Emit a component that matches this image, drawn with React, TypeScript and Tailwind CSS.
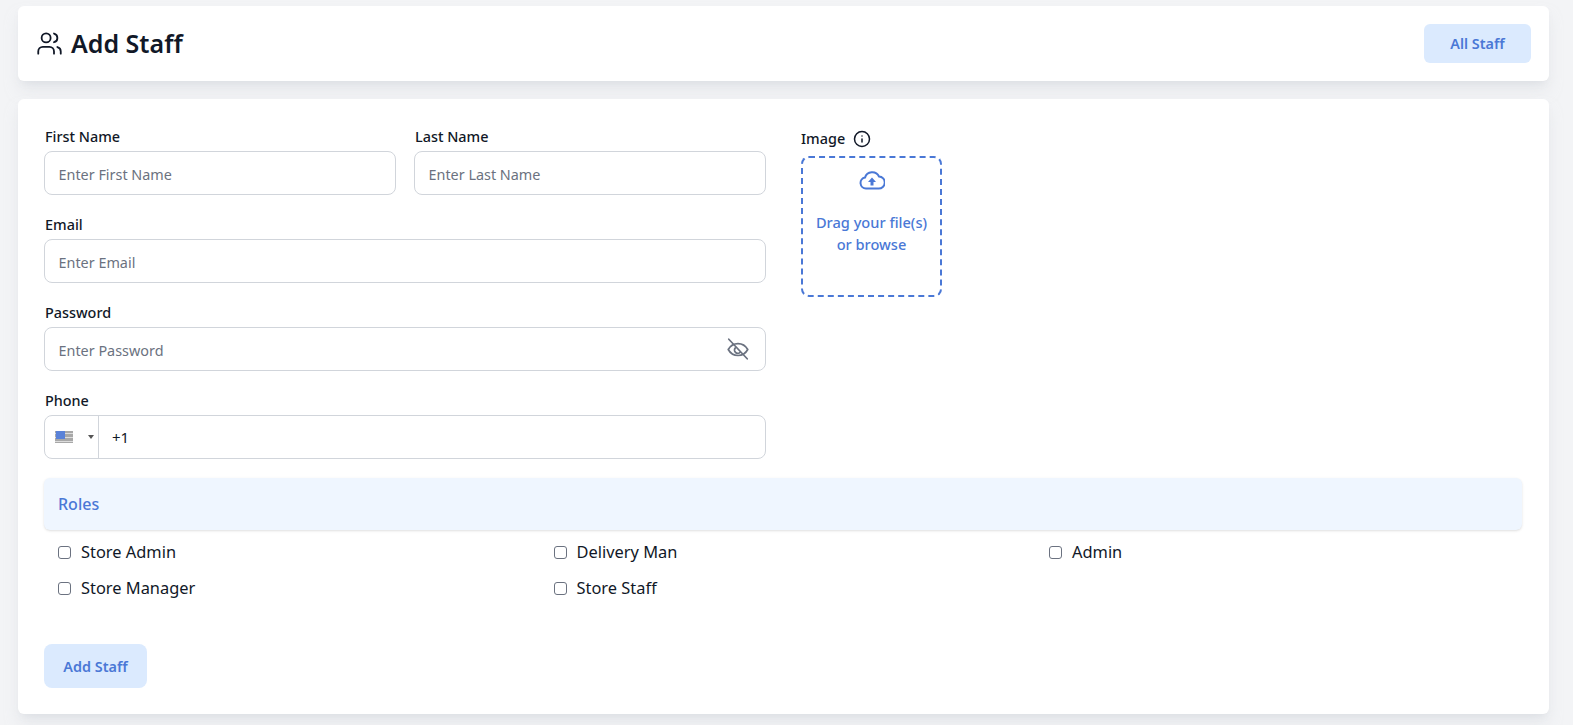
import { Users, Info } from "lucide-react";

function Field({ label, placeholder, children }: { label: string; placeholder: string; children?: React.ReactNode }) {
  return (
    <div className="flex flex-col min-w-0">
      <label className="h-[25px] pt-px pl-px mb-[2px] text-[14.4px] leading-[24px] font-medium text-[#111827]">{label}</label>
      <div className="relative">
        <input
          placeholder={placeholder}
          className="w-full h-[44px] rounded-lg border border-[#d1d5db] bg-white pl-[13.5px] pr-[14px] pt-[2px] text-[14.4px] text-[#111827] placeholder:text-[#6b7280] outline-none"
        />
        {children}
      </div>
    </div>
  );
}

function Role({ label }: { label: string }) {
  return (
    <label className="flex items-center h-[36px] text-[16.4px] text-[#111827]">
      <span className="w-[13px] h-[13px] rounded-[3px] border border-[#6b7280] bg-white mr-[10px] shrink-0" />
      {label}
    </label>
  );
}

export default function App() {
  return (
    <div className="min-h-[725px] bg-[#f3f4f6] pl-[18px] pr-[24px] pt-[6px] pb-[8px] font-['Noto_Sans',sans-serif] flex flex-col gap-[18px]">
      <header className="h-[75px] bg-white rounded-md shadow-lg shadow-gray-300/50 flex items-center justify-between pl-[18px] pr-[18px]">
        <div className="flex items-center gap-[8px]">
          <Users size={27} strokeWidth={1.6} className="text-[#111827]" />
          <h1 className="text-[25px] font-semibold text-[#111827]">Add Staff</h1>
        </div>
        <button className="w-[107px] h-[39px] rounded-md bg-[#dbeafe] text-[14.4px] font-semibold text-[#4a78d6]">All Staff</button>
      </header>

      <main className="h-[615px] bg-white rounded-md shadow-lg shadow-gray-300/50 pt-[25px] pl-[26px] pr-[27px]">
        <div className="flex">
          <div className="w-[722px] flex flex-col gap-[17px]">
            <div className="grid grid-cols-2 gap-[18px]">
              <Field label="First Name" placeholder="Enter First Name" />
              <Field label="Last Name" placeholder="Enter Last Name" />
            </div>
            <Field label="Email" placeholder="Enter Email" />
            <Field label="Password" placeholder="Enter Password">
              <svg width="26" height="26" viewBox="0 0 24 24" fill="none" stroke="#6b7280" strokeWidth="1.6" strokeLinecap="round" strokeLinejoin="round" className="absolute right-[15px] top-[9px]">
                <path d="M3 12.500c2-3.600 5-5.500 9-5.500s7 1.900 9 5.500c-2 3.600-5 5.500-9 5.500s-7-1.900-9-5.500z" />
                <path d="M9.500 11a3 3 0 0 0 4.500 4" />
                <path d="M3.500 3l17 18" />
              </svg>
            </Field>
            <div className="flex flex-col">
              <label className="h-[25px] pt-px pl-px mb-[2px] text-[14.4px] leading-[24px] font-medium text-[#111827]">Phone</label>
              <div className="flex h-[44px] rounded-lg border border-[#d1d5db] bg-white items-center">
                <div className="w-[54px] h-full border-r border-[#d1d5db] flex items-center pl-[10px] shrink-0">
                  <svg width="18" height="12" viewBox="0 0 18 12">
                    <rect width="18" height="12" fill="#a8a8a8" />
                    <rect y="2" width="18" height="1" fill="#dcdcdc" />
                    <rect y="6" width="18" height="1" fill="#dcdcdc" />
                    <rect y="10" width="18" height="1" fill="#dcdcdc" />
                    <rect x="1" width="9" height="8" fill="#5a82d8" />
                  </svg>
                  <span className="ml-[15px] w-0 h-0 border-x-[3px] border-x-transparent border-t-[4px] border-t-[#555]" />
                </div>
                <span className="pl-[13px] text-[15px] text-[#111827]">+1</span>
              </div>
            </div>
          </div>
          <div className="ml-[35px] mt-[1px]">
            <div className="flex items-center h-[26px] pt-px mb-[5px] text-[14.4px] font-medium text-[#111827]">
              Image
              <Info size={18} strokeWidth={2} className="ml-[8px]" />
            </div>
            <div className="w-[141px] h-[141px] rounded-lg border-2 border-dashed border-[#4a78d6] flex flex-col items-center pt-[12px] text-[#4a78d6]">
              <svg width="26" height="20" viewBox="0 0 26 20" fill="none" stroke="currentColor" strokeWidth="2" strokeLinejoin="round">
                <path d="M7 18.500a5.500 5.500 0 0 1-1-10.900A7.500 7.500 0 0 1 20 6.500a6 6 0 0 1-.5 12z" />
                <path d="M13 7.500l4 4.500h-2.500v3.500h-3V12H9z" fill="currentColor" stroke="none" />
              </svg>
              <p className="mt-[21px] text-center text-[14.6px] leading-[22px] font-medium">Drag your file(s)<br />or browse</p>
            </div>
          </div>
        </div>

        <div className="mt-[19px] h-[52px] rounded-md bg-[#eff6ff] shadow-sm flex items-center px-[14px] text-[16px] font-medium text-[#4a78d6]">Roles</div>

        <div className="grid grid-cols-[repeat(3,495.500px)] pl-[14px] mt-[3px] pt-px">
          <Role label="Store Admin" />
          <Role label="Delivery Man" />
          <Role label="Admin" />
          <Role label="Store Manager" />
          <Role label="Store Staff" />
        </div>

        <button className="mt-[38px] w-[103px] h-[44px] rounded-lg bg-[#dbeafe] pt-px text-[14.4px] font-semibold text-[#4a78d6]">Add Staff</button>
      </main>
    </div>
  );
}
